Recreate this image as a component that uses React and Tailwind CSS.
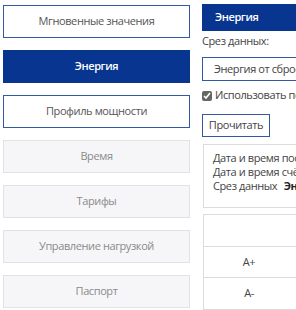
import React from "react";

const navItems = [
  { label: "Мгновенные значения", state: "normal" },
  { label: "Энергия", state: "active" },
  { label: "Профиль мощности", state: "normal" },
  { label: "Время", state: "disabled" },
  { label: "Тарифы", state: "disabled" },
  { label: "Управление нагрузкой", state: "disabled" },
  { label: "Паспорт", state: "disabled" },
];

function NavButton({ label, state }) {
  const styles = {
    normal: "border-[#3459a4] bg-white text-[#555]",
    active: "border-[#073590] bg-[#073590] text-white font-semibold",
    disabled: "border-[#e1e2e6] bg-[#f6f6f8] text-[#8a8a8a]",
  };
  return (
    <button className={`h-[33px] w-full border text-[11px] ${styles[state]}`}>
      {label}
    </button>
  );
}

export default function App() {
  return (
    <div
      className="flex h-[310px] w-[296px] overflow-hidden bg-white text-[11px] tracking-[-0.4px] text-[#333]"
      style={{ fontFamily: '"Open Sans", "Noto Sans", sans-serif' }}
    >
      <div className="ml-[3px] flex w-[187px] shrink-0 flex-col gap-[12px] pt-[5px]">
        {navItems.map((item) => (
          <NavButton key={item.label} {...item} />
        ))}
      </div>

      <div className="ml-[12px] flex w-[300px] shrink-0 flex-col pt-[4px]">
        <div className="flex h-[29px] items-center bg-[#073590] px-[13px] font-semibold text-white">
          Энергия
        </div>
        <div className="mt-[1px] leading-[18px] text-[#444]">Срез данных:</div>
        <div className="mt-[7px] flex h-[25px] items-center border border-[#3459a4] px-[11px] text-[#444] whitespace-nowrap">
          Энергия от сброса
        </div>
        <label className="mt-[8px] flex h-[14px] items-center gap-[3px] whitespace-nowrap text-[#444]">
          <input type="checkbox" defaultChecked className="m-0 h-[10px] w-[10px] accent-[#666]" />
          Использовать показания
        </label>
        <button className="mt-[11px] h-[25px] w-[68px] border border-[#3459a4] bg-white text-center text-[#444]">
          Прочитать
        </button>
        <div className="mt-[7px] ml-[1px] flex h-[68px] flex-col border border-[#dcdcdc] px-[9px] pt-[6px] leading-[14px] text-[#444] whitespace-nowrap">
          <div>Дата и время последнего чтения</div>
          <div>Дата и время счётчика</div>
          <div>
            Срез данных <span className="ml-[4px] font-bold text-[#222]">Энергия</span>
          </div>
        </div>
        <div className="mt-[6px] ml-[1px] flex flex-col border border-[#dcdcdc] text-[#444]">
          <div className="h-[32px] border-b border-[#dcdcdc]"></div>
          <div className="flex h-[31px] border-b border-[#dcdcdc]">
            <div className="flex w-[90px] items-center justify-center">A+</div>
          </div>
          <div className="flex h-[31px]">
            <div className="flex w-[90px] items-center justify-center">A-</div>
          </div>
        </div>
      </div>
    </div>
  );
}
